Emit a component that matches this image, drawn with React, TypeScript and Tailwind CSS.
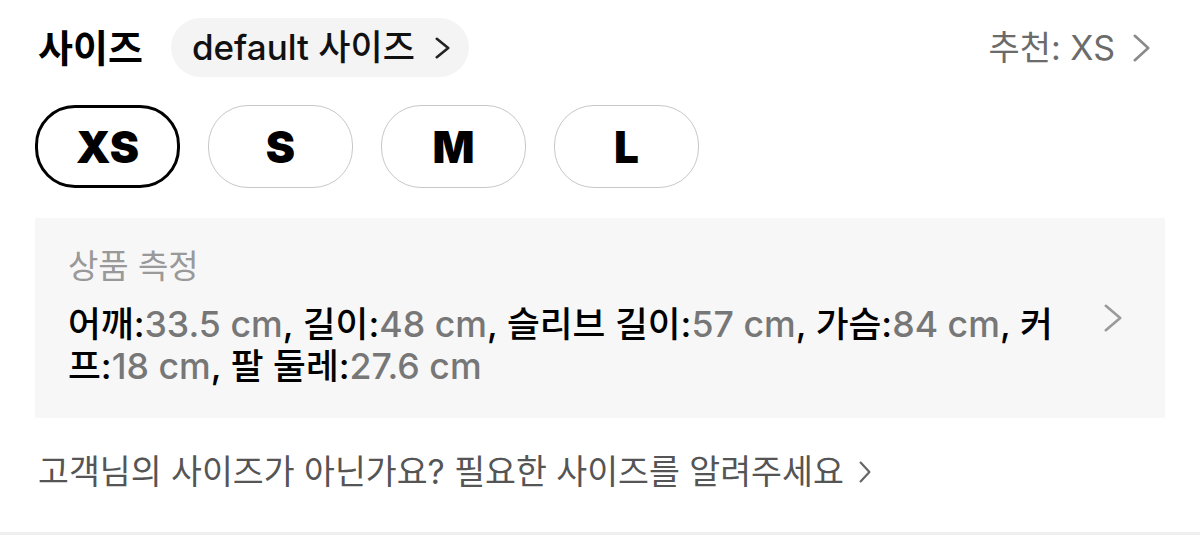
import React from "react";

const FONT = 'Inter, "Noto Sans CJK KR", sans-serif';

function Chevron({ w, h, stroke = 2.6, className }: { w: number; h: number; stroke?: number; className?: string }) {
  const p = stroke / 2 + 0.5;
  return (
    <svg width={w} height={h} viewBox={`0 0 ${w} ${h}`} fill="none" className={className}>
      <path
        d={`M${p} ${p}L${w - p} ${h / 2}L${p} ${h - p}`}
        stroke="currentColor"
        strokeWidth={stroke}
        strokeLinecap="round"
        strokeLinejoin="round"
      />
    </svg>
  );
}

const sizes = ["XS", "S", "M", "L"];

const measures: [string, string][] = [
  ["어깨", "33.5 cm"],
  ["길이", "48 cm"],
  ["슬리브 길이", "57 cm"],
  ["가슴", "84 cm"],
  ["커프", "18 cm"],
  ["팔 둘레", "27.6 cm"],
];

export default function App() {
  return (
    <div className="w-[1200px] h-[535px] bg-white flex flex-col" style={{ fontFamily: FONT }}>
      <div className="flex-1 px-[35px]">
        {/* header */}
        <div className="flex items-center pt-[18px] h-[77px]">
          <span className="text-[38px] font-bold text-black ml-[3px] leading-none">사이즈</span>
          <button className="ml-[28px] h-[59px] pl-[21px] pr-[19px] rounded-full bg-[#f4f4f4] flex items-center text-[35px] font-medium text-[#111] leading-none">
            default 사이즈
            <Chevron w={15} h={22} className="ml-[20px] text-[#222]" />
          </button>
          <div className="ml-auto mr-[15px] flex items-center text-[34px] text-[#6b6b6b] leading-none">
            추천: XS
            <Chevron w={17} h={28} className="ml-[18px] text-[#8a8a8a]" />
          </div>
        </div>

        {/* size options */}
        <div className="flex gap-[28px] mt-[28px]">
          {sizes.map((s, i) => (
            <div
              key={s}
              className={
                i === 0
                  ? "w-[145px] h-[83px] rounded-[40px] border-[3px] border-black flex items-center justify-center text-[44px] font-black text-black"
                  : "w-[145px] h-[83px] rounded-[40px] border border-[#c8c8c8] flex items-center justify-center text-[44px] font-black text-black"
              }
            >
              {s}
            </div>
          ))}
        </div>

        {/* measurements */}
        <div className="mt-[30px] h-[200px] bg-[#f7f7f7] flex items-center pl-[33px] pr-[43px]">
          <div className="w-[1010px]">
            <div className="text-[33px] text-[#999] leading-none mb-[20px]">상품 측정</div>
            <div className="text-[35.7px] font-medium leading-[42px] text-black">
              {measures.map(([k, v], i) => (
                <React.Fragment key={k}>
                  {k}:<span className="text-[#777]">{v}</span>
                  {i < measures.length - 1 ? ", " : ""}
                </React.Fragment>
              ))}
            </div>
          </div>
          <Chevron w={18} h={28} className="ml-auto text-[#9a9a9a]" />
        </div>

        {/* request */}
        <div className="mt-[37px] ml-[3px] flex items-center text-[33.6px] text-[#555] leading-none">
          고객님의 사이즈가 아닌가요? 필요한 사이즈를 알려주세요
          <Chevron w={12} h={22} stroke={2.2} className="ml-[15px] text-[#666]" />
        </div>
      </div>
      <div className="h-[3px] bg-[#efefef]" />
    </div>
  );
}
